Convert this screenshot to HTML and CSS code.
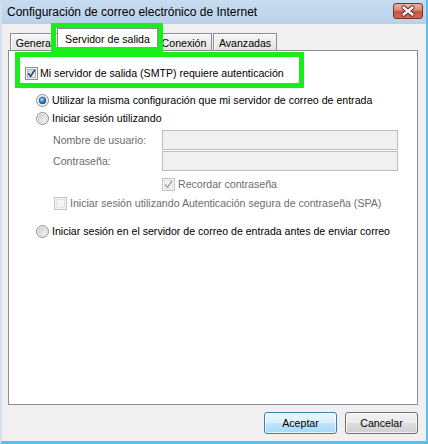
FILE: index.html
```html
<!DOCTYPE html>
<html lang="es">
<head>
    <meta charset="UTF-8">
    <title>Configuración de correo electrónico de Internet</title>
    <link rel="stylesheet" href="styles.css">
</head>
<body>
    <svg class="defs" width="0" height="0">
        <defs>
            <linearGradient id="boxFill" x1="0" y1="0" x2="1" y2="1">
                <stop offset="0" stop-color="#cbcfd5"/>
                <stop offset="1" stop-color="#f7f7f7"/>
            </linearGradient>
            <linearGradient id="ringFill" x1="0" y1="0" x2="1" y2="1">
                <stop offset="0" stop-color="#c9ccd1"/>
                <stop offset="1" stop-color="#fbfbfb"/>
            </linearGradient>
            <radialGradient id="dotFill" cx="0.4" cy="0.35" r="0.7">
                <stop offset="0" stop-color="#bfe6ff"/>
                <stop offset="0.45" stop-color="#3d95dc"/>
                <stop offset="1" stop-color="#12407e"/>
            </radialGradient>
        </defs>
    </svg>

    <div class="window">
        <div class="titlebar">
            <span class="title">Configuración de correo electrónico de Internet</span>
            <div class="close">
                <svg width="30" height="16" viewBox="0 0 30 16">
                    <path d="M10.5 4.5 L19.5 11.5 M19.5 4.5 L10.5 11.5" stroke="#5b2a24" stroke-width="4.2" stroke-linecap="round" fill="none"/>
                    <path d="M10.5 4.5 L19.5 11.5 M19.5 4.5 L10.5 11.5" stroke="#ffffff" stroke-width="2.4" stroke-linecap="round" fill="none"/>
                </svg>
            </div>
        </div>

        <div class="client">
            <div class="tabs">
                <div class="tab tab-general">General</div>
                <div class="tab active">Servidor de salida</div>
                <div class="tab tab-conexion">Conexión</div>
                <div class="tab tab-avanzadas">Avanzadas</div>
            </div>

            <div class="panel">
                <div class="highlight">
                    <div class="row">
                        <svg class="check" width="13" height="13" viewBox="0 0 13 13">
                            <rect x="0.5" y="0.5" width="12" height="12" fill="#f4f4f4" stroke="#8e8f8f"/>
                            <rect x="2.5" y="2.5" width="8" height="8" fill="url(#boxFill)" stroke="#b4b9bf"/>
                            <path d="M3.2 6.4 L5.6 9.2 L10 2.8" stroke="#2b4b8c" stroke-width="1.7" fill="none"/>
                        </svg>
                        <span>Mi servidor de salida (SMTP) requiere autenticación</span>
                    </div>
                </div>

                <div class="row opt first">
                    <svg class="radio" width="13" height="13" viewBox="0 0 13 13">
                        <circle cx="6.5" cy="6.5" r="6" fill="#f2f2f2" stroke="#8e8f8f"/>
                        <circle cx="6.5" cy="6.5" r="4.2" fill="url(#ringFill)"/>
                        <circle cx="6.5" cy="6.5" r="3.4" fill="url(#dotFill)" stroke="#1b4d87" stroke-width="0.6"/>
                    </svg>
                    <span>Utilizar la misma configuración que mi servidor de correo de entrada</span>
                </div>
                <div class="row opt">
                    <svg class="radio" width="13" height="13" viewBox="0 0 13 13">
                        <circle cx="6.5" cy="6.5" r="6" fill="#f2f2f2" stroke="#8e8f8f"/>
                        <circle cx="6.5" cy="6.5" r="4.2" fill="url(#ringFill)" stroke="#c2c6cb" stroke-width="0.6"/>
                    </svg>
                    <span>Iniciar sesión utilizando</span>
                </div>

                <div class="field first">
                    <span class="label">Nombre de usuario:</span>
                    <div class="input"></div>
                </div>
                <div class="field">
                    <span class="label">Contraseña:</span>
                    <div class="input"></div>
                </div>

                <div class="row remember disabled">
                    <svg class="check" width="13" height="13" viewBox="0 0 13 13">
                        <rect x="0.5" y="0.5" width="12" height="12" fill="#f4f4f4" stroke="#c4c4c4"/>
                        <rect x="2.5" y="2.5" width="8" height="8" fill="#f4f4f4" stroke="#e2e2e2"/>
                        <path d="M3.2 6.4 L5.6 9.2 L10 2.8" stroke="#a8a8a8" stroke-width="1.6" fill="none"/>
                    </svg>
                    <span>Recordar contraseña</span>
                </div>
                <div class="row spa disabled">
                    <svg class="check" width="13" height="13" viewBox="0 0 13 13">
                        <rect x="0.5" y="0.5" width="12" height="12" fill="#f4f4f4" stroke="#c4c4c4"/>
                        <rect x="2.5" y="2.5" width="8" height="8" fill="#f4f4f4" stroke="#e2e2e2"/>
                    </svg>
                    <span>Iniciar sesión utilizando Autenticación segura de contraseña (SPA)</span>
                </div>

                <div class="row opt last">
                    <svg class="radio" width="13" height="13" viewBox="0 0 13 13">
                        <circle cx="6.5" cy="6.5" r="6" fill="#f2f2f2" stroke="#8e8f8f"/>
                        <circle cx="6.5" cy="6.5" r="4.2" fill="url(#ringFill)" stroke="#c2c6cb" stroke-width="0.6"/>
                    </svg>
                    <span>Iniciar sesión en el servidor de correo de entrada antes de enviar correo</span>
                </div>
            </div>

            <div class="footer">
                <button class="btn default">Aceptar</button>
                <button class="btn">Cancelar</button>
            </div>
        </div>
    </div>
</body>
</html>
```

FILE: styles.css
```css
body {
    margin: 0;
    font-family: "Liberation Sans", Arial, sans-serif;
    font-size: 10.6px;
    color: #000;
    background: #fff;
}
.defs {
    display: block;
}
.window {
    width: 428px;
    height: 444px;
    box-sizing: border-box;
    display: flex;
    flex-direction: column;
    border-left: 2px solid #d2dfec;
    border-right: 2px solid #52c1ef;
    border-bottom: 3px solid #52c1ef;
    background: #f0f0f0;
}
.titlebar {
    height: 24px;
    flex-shrink: 0;
    display: flex;
    justify-content: space-between;
    align-items: center;
    padding-left: 5px;
    background: linear-gradient(#c8dcf1, #b9d1ea);
}
.title {
    font-size: 12px;
    color: #000;
}
.close {
    align-self: flex-start;
    width: 30px;
    height: 16px;
    margin: 3px 3px 0 0;
    box-sizing: border-box;
    border: 1px solid #7a3128;
    border-radius: 3px;
    background: linear-gradient(#e9b2a6 0%, #d98a79 45%, #c9503d 55%, #d06a55 100%);
    display: flex;
    align-items: center;
    justify-content: center;
}
.close svg {
    margin: -1px;
}
.client {
    flex: 1;
    display: flex;
    flex-direction: column;
    padding: 0 8px 0 6px;
}
.tabs {
    height: 26px;
    flex-shrink: 0;
    display: flex;
    align-items: flex-end;
    padding-left: 2px;
    position: relative;
    z-index: 1;
}
.tab {
    height: 17px;
    box-sizing: border-box;
    border: 1px solid #898c95;
    border-bottom: none;
    background: linear-gradient(#f5f5f5, #e4e4e4);
    box-shadow: inset 1px 1px 0 #fff;
    display: flex;
    align-items: center;
    justify-content: center;
    padding-top: 1px;
}
.tab-general {
    width: 49px;
}
.tab-conexion {
    width: 56px;
}
.tab-avanzadas {
    width: 64px;
    margin-left: 1px;
}
.tab.active {
    width: 101px;
    height: 23px;
    margin: 0 -2px -1px;
    padding-top: 0;
    padding-bottom: 3px;
    background: #fff;
    box-shadow: none;
    position: relative;
    z-index: 2;
}
.tab.active::after {
    content: "";
    position: absolute;
    left: -7px;
    top: -6px;
    width: 112px;
    height: 29px;
    box-sizing: border-box;
    border: 5px solid #19ee19;
}
.panel {
    flex: 1;
    border: 1px solid #898c95;
    background: #fff;
}
.highlight {
    width: 289px;
    height: 36px;
    box-sizing: border-box;
    margin: 1px 0 0 6px;
    padding: 6px 0 0 5px;
    border: 5px solid #19ee19;
}
.row {
    height: 18px;
    display: flex;
    align-items: center;
    gap: 3px;
}
.highlight .row {
    height: 20px;
    gap: 2px;
}
.check, .radio {
    flex-shrink: 0;
}
.opt {
    margin-left: 27px;
}
.opt.first {
    margin-top: 3px;
}
.opt.last {
    margin-top: 10px;
}
.field {
    height: 20px;
    margin: 1px 0 0 44px;
    display: flex;
    align-items: center;
}
.field.first {
    margin-top: 3px;
}
.label {
    width: 109px;
    color: #6d6d6d;
}
.input {
    width: 236px;
    height: 20px;
    box-sizing: border-box;
    border: 1px solid #b9bdc1;
    background: #f0f0f0;
}
.disabled {
    color: #6d6d6d;
}
.remember {
    margin: 4px 0 0 153px;
}
.spa {
    margin: 1px 0 0 45px;
}
.footer {
    height: 36px;
    flex-shrink: 0;
    box-sizing: border-box;
    padding-top: 7px;
    display: flex;
    justify-content: flex-end;
    align-items: flex-start;
    gap: 8px;
}
.btn {
    width: 73px;
    height: 22px;
    box-sizing: border-box;
    border: 1px solid #707070;
    border-radius: 3px;
    background: linear-gradient(#f2f2f2 0%, #ebebeb 50%, #dddddd 51%, #cfcfcf 100%);
    box-shadow: inset 0 0 0 1px rgba(255,255,255,0.7);
    font-family: inherit;
    font-size: 10.6px;
    color: #000;
    padding: 0;
}
.btn.default {
    border-color: #3c7fb1;
    background: linear-gradient(#eaf6fd 0%, #d9f0fc 50%, #bee6fd 51%, #a7d9f5 100%);
}
```
